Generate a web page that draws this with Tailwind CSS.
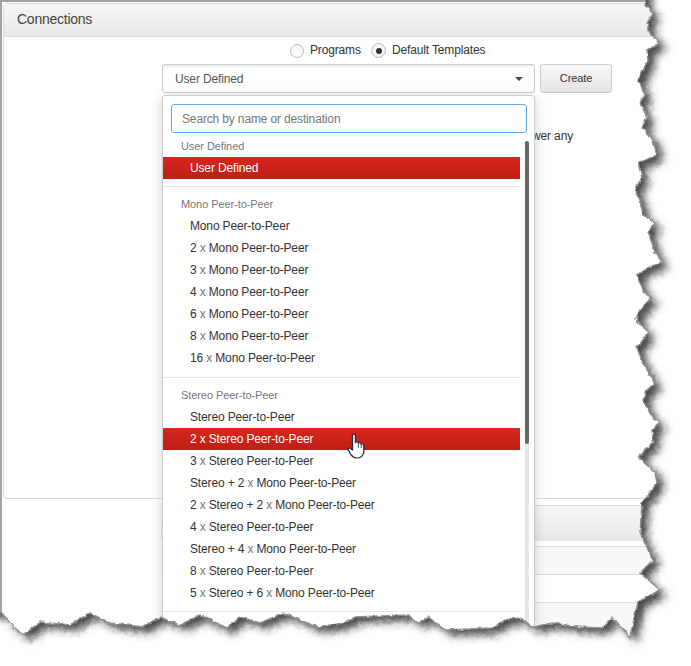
<!DOCTYPE html>
<html lang="en">
<head>
    <meta charset="UTF-8">
    <title>Connections</title>
    <script src="https://cdn.jsdelivr.net/npm/@tailwindcss/browser@4"></script>
</head>
<body class="bg-white">
    <div class="relative w-[691px] h-[666px] overflow-hidden bg-white pt-[3px] pl-[3px] text-[12px] tracking-[-0.15px] text-[#333] [font-family:'Liberation_Sans',Arial,sans-serif]">
        <!-- Connections panel -->
        <section class="w-[700px] h-[496px] border border-[#ddd] rounded-l-[4px]">
            <header class="h-[33px] flex items-center pl-[13px] pb-[2px] text-[14px] tracking-[-0.25px] text-[#444] bg-gradient-to-b from-[#f6f6f6] to-[#e8e8e8] border-b border-[#ddd]">Connections</header>
            <div class="flex items-center h-[26px] pl-[286px] pt-[1px]">
                <span class="w-[14px] h-[14px] rounded-full border border-[#bbb] bg-gradient-to-b from-[#f4f4f4] to-white"></span>
                <span class="ml-[6px] w-[61px] -mt-[2px]">Programs</span>
                <span class="w-[15px] h-[15px] rounded-full border border-[#bbb] bg-[#f4f4f4] flex items-center justify-center">
                    <span class="w-[6px] h-[6px] rounded-full bg-[#333]"></span>
                </span>
                <span class="ml-[6px] -mt-[2px]">Default Templates</span>
            </div>
            <div class="flex h-[29px] mt-[1px] pl-[158px] gap-[5px]">
                <div class="w-[373px] flex items-center justify-between pl-[12px] pr-[11px] border border-[#ccc] rounded-[3px] text-[#555] shadow-[inset_0_2px_2px_rgba(0,0,0,0.07)]">
                    <span>User Defined</span>
                    <span class="w-0 h-0 border-x-[4px] border-x-transparent border-t-[4px] border-t-[#444]"></span>
                </div>
                <button class="w-[72px] border border-[#ccc] rounded-[3px] text-[11px] tracking-[-0.1px] text-[#333] bg-gradient-to-b from-[#f9f9f9] to-[#e3e3e3]">Create</button>
            </div>
            <p class="pl-[515px] mt-[36px] leading-[14px]">power any</p>
        </section>

        <!-- Panel underneath the dropdown -->
        <section class="ml-[158px] mt-[6px] border-t border-[#ddd]">
            <div class="h-[35px] bg-gradient-to-b from-[#f6f6f6] to-[#e8e8e8]"></div>
            <div class="h-[6px] border-b border-[#ddd]"></div>
            <div class="h-[28px] bg-[#f8f8f8] border-b border-[#ddd]"></div>
            <div class="h-[28px] bg-white border-b border-[#ddd]"></div>
            <div class="h-[60px] bg-[#f8f8f8]"></div>
        </section>

        <!-- Open dropdown -->
        <div class="absolute left-[162px] top-[95px] w-[373px] h-[600px] bg-white border border-[#ccc] rounded-t-[3px] shadow-[0_2px_12px_rgba(0,0,0,0.18)]">
            <input class="block ml-[8px] mt-[8px] w-[356px] h-[29px] px-[10px] border border-[#5aabf0] rounded-[3px] outline-none text-[12px] placeholder:text-[#777]" placeholder="Search by name or destination">

            <div class="mt-[4px] h-[18px] mb-[2px] pl-[18px] flex items-center text-[11px] tracking-[-0.08px] text-[#777]">User Defined</div>
            <div class="w-[357px] h-[22px] pl-[27px] flex items-center text-white bg-gradient-to-b from-[#da261d] to-[#bd1f15]">User Defined</div>
            <div class="w-[357px] mt-[7px] border-t border-[#e5e5e5]"></div>

            <div class="mt-[8px] h-[18px] mb-[2px] pl-[18px] flex items-center text-[11px] tracking-[-0.08px] text-[#777]">Mono Peer-to-Peer</div>
            <div class="w-[357px] h-[22px] pl-[27px] flex items-center">Mono Peer-to-Peer</div>
            <div class="w-[357px] h-[22px] pl-[27px] flex items-center whitespace-pre">2 <span class="text-[#777]">x</span> Mono Peer-to-Peer</div>
            <div class="w-[357px] h-[22px] pl-[27px] flex items-center whitespace-pre">3 <span class="text-[#777]">x</span> Mono Peer-to-Peer</div>
            <div class="w-[357px] h-[22px] pl-[27px] flex items-center whitespace-pre">4 <span class="text-[#777]">x</span> Mono Peer-to-Peer</div>
            <div class="w-[357px] h-[22px] pl-[27px] flex items-center whitespace-pre">6 <span class="text-[#777]">x</span> Mono Peer-to-Peer</div>
            <div class="w-[357px] h-[22px] pl-[27px] flex items-center whitespace-pre">8 <span class="text-[#777]">x</span> Mono Peer-to-Peer</div>
            <div class="w-[357px] h-[22px] pl-[27px] flex items-center whitespace-pre">16 <span class="text-[#777]">x</span> Mono Peer-to-Peer</div>
            <div class="w-[357px] mt-[8px] border-t border-[#e5e5e5]"></div>

            <div class="mt-[8px] h-[18px] mb-[2px] pl-[18px] flex items-center text-[11px] tracking-[-0.08px] text-[#777]">Stereo Peer-to-Peer</div>
            <div class="w-[357px] h-[22px] pl-[27px] flex items-center">Stereo Peer-to-Peer</div>
            <div class="w-[357px] h-[22px] pl-[27px] flex items-center whitespace-pre text-white bg-gradient-to-b from-[#da261d] to-[#bd1f15]">2 x Stereo Peer-to-Peer</div>
            <div class="w-[357px] h-[22px] pl-[27px] flex items-center whitespace-pre">3 <span class="text-[#777]">x</span> Stereo Peer-to-Peer</div>
            <div class="w-[357px] h-[22px] pl-[27px] flex items-center whitespace-pre">Stereo + 2 <span class="text-[#777]">x</span> Mono Peer-to-Peer</div>
            <div class="w-[357px] h-[22px] pl-[27px] flex items-center whitespace-pre">2 <span class="text-[#777]">x</span> Stereo + 2 <span class="text-[#777]">x</span> Mono Peer-to-Peer</div>
            <div class="w-[357px] h-[22px] pl-[27px] flex items-center whitespace-pre">4 <span class="text-[#777]">x</span> Stereo Peer-to-Peer</div>
            <div class="w-[357px] h-[22px] pl-[27px] flex items-center whitespace-pre">Stereo + 4 <span class="text-[#777]">x</span> Mono Peer-to-Peer</div>
            <div class="w-[357px] h-[22px] pl-[27px] flex items-center whitespace-pre">8 <span class="text-[#777]">x</span> Stereo Peer-to-Peer</div>
            <div class="w-[357px] h-[22px] pl-[27px] flex items-center whitespace-pre">5 <span class="text-[#777]">x</span> Stereo + 6 <span class="text-[#777]">x</span> Mono Peer-to-Peer</div>
            <div class="w-[357px] mt-[7px] border-t border-[#e5e5e5]"></div>

            <!-- Scrollbar -->
            <div class="absolute left-[362px] top-[45px] bottom-0 w-[4px] bg-[#e6e6e6]">
                <div class="h-[303px] rounded-[2px] bg-[#666]"></div>
            </div>
        </div>

        <!-- Hand cursor -->
        <svg class="absolute left-[347px] top-[433px]" width="19" height="26" viewBox="0 0 15.500 25" preserveAspectRatio="none">
            <path d="M4.500 2.200c0-1.400 2.400-1.400 2.400 0v7.200c.2-1.400 2.300-1.300 2.400.1v.6c.2-1.300 2.200-1.200 2.300.2v.8c.3-1.100 2-1 2.100.3v6.600c0 3.400-2.200 6-5.200 6-2.600 0-4-1.200-5.200-3L1 16.400c-.9-1.500.9-2.700 2.100-1.500l1.400 1.500z" fill="#fff" stroke="#2b2f36" stroke-width="1.100" stroke-linejoin="round"/>
            <path d="M9.300 10.200v4M11.600 11v3.500" stroke="#2b2f36" stroke-width="0.800" fill="none"/>
        </svg>

        <!-- Torn paper edge -->
        <svg class="absolute inset-0" width="691" height="666" viewBox="0 0 691 666">
            <defs>
                <path id="edge" d="M-20 -20L645 -20 645 5 653 13 647 23 650 33 660 43 647 50 648 60 642 73 638 80 645 93 640 103 647 117 642 127 653 140 657 155 638 163 642 177 635 190 640 200 643 215 655 223 648 232 655 252 662 262 647 268 637 275 643 292 652 297 640 310 636 319 648 333 637 348 643 363 655 383 647 390 643 400 652 417 660 423 652 430 653 442 638 457 655 472 657 483 642 503 640 533 653 560 640 573 660 590 638 602 630 637 612 617 602 628 578 627 552 623 533 627 520 618 505 620 492 628 445 630 428 617 418 623 408 615 355 617 345 623 317 627 283 613 260 623 240 617 227 628 200 615 180 625 160 617 143 627 110 623 90 613 70 625 40 622 23 635 10 623 1 612 -20 612Z"/>
                <clipPath id="outside">
                    <path clip-rule="evenodd" d="M-40 -40H731V706H-40Z M-20 -20L645 -20 645 5 653 13 647 23 650 33 660 43 647 50 648 60 642 73 638 80 645 93 640 103 647 117 642 127 653 140 657 155 638 163 642 177 635 190 640 200 643 215 655 223 648 232 655 252 662 262 647 268 637 275 643 292 652 297 640 310 636 319 648 333 637 348 643 363 655 383 647 390 643 400 652 417 660 423 652 430 653 442 638 457 655 472 657 483 642 503 640 533 653 560 640 573 660 590 638 602 630 637 612 617 602 628 578 627 552 623 533 627 520 618 505 620 492 628 445 630 428 617 418 623 408 615 355 617 345 623 317 627 283 613 260 623 240 617 227 628 200 615 180 625 160 617 143 627 110 623 90 613 70 625 40 622 23 635 10 623 1 612 -20 612Z"/>
                </clipPath>
                <filter id="blur" filterUnits="userSpaceOnUse" x="-40" y="-40" width="771" height="746">
                    <feGaussianBlur stdDeviation="4.500"/>
                </filter>
                <filter id="rough" filterUnits="userSpaceOnUse" x="-40" y="-40" width="771" height="746">
                    <feTurbulence type="fractalNoise" baseFrequency="0.18" numOctaves="2" seed="4"/>
                    <feDisplacementMap in="SourceGraphic" scale="4" xChannelSelector="R" yChannelSelector="G"/>
                </filter>
            </defs>
            <g filter="url(#rough)">
                <g clip-path="url(#outside)">
                    <rect x="-40" y="-40" width="771" height="746" fill="#fff"/>
                    <use href="#edge" transform="translate(7 6)" filter="url(#blur)" fill="#4a4a4a"/>
                </g>
                <use href="#edge" fill="none" stroke="#909090" stroke-width="1.500"/>
            </g>
            <!-- straight top and left sides of the capture -->
            <path d="M1 612V1H645" fill="none" stroke="#a3a3a3" stroke-width="2"/>
        </svg>
    </div>
</body>
</html>
